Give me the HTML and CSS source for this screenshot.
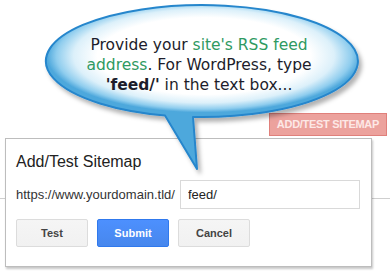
FILE: index.html
```html
<!DOCTYPE html>
<html>
<head>
	<meta charset="utf-8" />
	<title>Add/Test Sitemap</title>
	<link rel="stylesheet" href="styles.css">
</head>
<body>
	<div class="page">
		<div class="toolbar">
			<span class="btn-red">ADD/TEST SITEMAP</span>
		</div>
		<div class="dialog">
			<div class="dialog-title">Add/Test Sitemap</div>
			<div class="field">
				<span class="prefix">https://www.yourdomain.tld/</span>
				<input type="text" class="path" value="feed/" />
			</div>
			<div class="actions">
				<button class="btn">Test</button>
				<button class="btn btn-blue">Submit</button>
				<button class="btn">Cancel</button>
			</div>
		</div>
	</div>

	<div class="bubble">
		<svg class="bubble-shape" width="390" height="180" viewBox="0 0 390 180">
			<defs>
				<radialGradient id="glow" gradientUnits="userSpaceOnUse" cx="204" cy="56" r="157"
					gradientTransform="matrix(1 0 0 0.36 0 35.8)">
					<stop offset="0" stop-color="#ffffff" />
					<stop offset="0.68" stop-color="#ffffff" />
					<stop offset="0.83" stop-color="#dcf0fa" />
					<stop offset="0.94" stop-color="#8fcdee" />
					<stop offset="1" stop-color="#4ea8dc" />
				</radialGradient>
				<filter id="shade" x="-10%" y="-10%" width="125%" height="130%">
					<feDropShadow dx="3" dy="4" stdDeviation="2" flood-color="#000" flood-opacity="0.3" />
				</filter>
			</defs>
			<path d="M193,117 A156,56 0 1 0 165,115.5 L197,169 Z"
				fill="url(#glow)" stroke="#2586cc" stroke-width="2" stroke-linejoin="round" filter="url(#shade)" />
		</svg>
		<div class="bubble-text">
			Provide your <span class="green">site's RSS feed</span><br />
			<span class="green">address</span>. For WordPress, type<br />
			<b>'feed/'</b> in the text box...
		</div>
	</div>
</body>
</html>
```

FILE: styles.css
```css
body {
	margin: 0;
	width: 390px;
	height: 274px;
	overflow: hidden;
	position: relative;
	background: #fff linear-gradient(#cfcfcf, #cfcfcf) no-repeat 0 198px / 100% 1px;
	font-family: "Liberation Sans", Arial, sans-serif;
}

.toolbar {
	height: 136px;
	display: flex;
	justify-content: flex-end;
	align-items: flex-end;
	padding-right: 3px;
}

.btn-red {
	height: 21px;
	line-height: 21px;
	padding: 0 7px;
	background: #eca29d;
	border: 1px solid #e0807b;
	color: #fde8e6;
	font-size: 11px;
	font-weight: bold;
	letter-spacing: -0.3px;
}

.dialog {
	margin: 2px 0 0 5px;
	width: 345px;
	height: 95px;
	padding: 14px 10px 18px 10px;
	background: #fff;
	border: 1px solid #bdbdbd;
	box-shadow: 1px 2px 2px rgba(0, 0, 0, 0.22);
}

.dialog-title {
	font-size: 16px;
	line-height: 18px;
	color: #222;
}

.field {
	margin-top: 9px;
	display: flex;
	align-items: center;
	gap: 5px;
}

.prefix {
	font-size: 13px;
	color: #333;
}

.path {
	box-sizing: border-box;
	width: 180px;
	height: 29px;
	margin: 0;
	padding: 0 7px;
	border: 1px solid #d9d9d9;
	font: 13px "Liberation Sans", Arial, sans-serif;
	color: #222;
	outline: none;
}

.actions {
	margin-top: 10px;
	display: flex;
	gap: 9px;
}

.btn {
	width: 72px;
	height: 28px;
	margin: 0;
	padding: 0;
	border: 1px solid #dcdcdc;
	border-radius: 2px;
	background: linear-gradient(#f5f5f5, #f1f1f1);
	color: #444;
	font: bold 11px "Liberation Sans", Arial, sans-serif;
}

.btn-blue {
	background: linear-gradient(#4d90fe, #4787ed);
	border-color: #3079ed;
	color: #fff;
}

.bubble {
	position: absolute;
	left: 0;
	top: 0;
	width: 390px;
	height: 180px;
}

.bubble-shape {
	position: absolute;
	left: 0;
	top: 0;
}

.bubble-text {
	position: relative;
	box-sizing: border-box;
	width: 390px;
	padding: 35px 0 0 8px;
	text-align: center;
	font-family: "DejaVu Sans", sans-serif;
	font-size: 15.5px;
	line-height: 20px;
	color: #1d1d2b;
}

.green {
	color: #2f9a62;
}
```
